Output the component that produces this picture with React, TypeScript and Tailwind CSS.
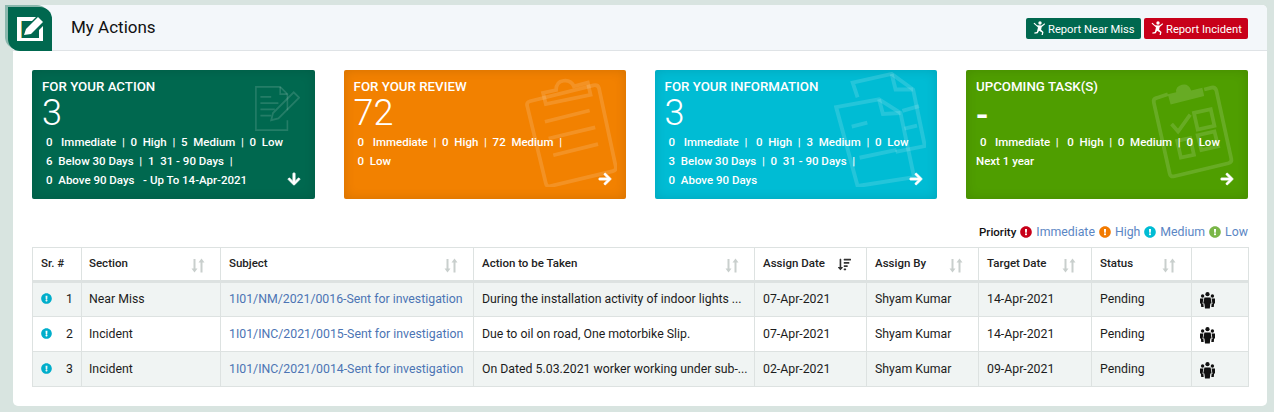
import React from "react";
import { FaArrowDown, FaArrowRight, FaExclamationCircle, FaSortAmountDown } from "react-icons/fa";

const Sort = () => (
  <svg width="14" height="15" viewBox="0 0 14 15" className="mt-[3px] text-[#c9cfcd]" fill="currentColor">
    <rect x="2.5" y="1" width="2" height="10" />
    <path d="M0.5 10.5h6L3.5 14.5z" />
    <rect x="9.5" y="4" width="2" height="10.5" />
    <path d="M7.5 4.5h6L10.5 0.5z" />
  </svg>
);

const Group = () => (
  <svg width="15" height="17" viewBox="0 0 15 17" fill="#111" className="mt-[2px]">
    <circle cx="7.5" cy="2.2" r="2.1" />
    <circle cx="2.6" cy="4" r="1.7" />
    <circle cx="12.4" cy="4" r="1.7" />
    <path d="M4.4 5.6h6.2l1 6h-1.3l-.5 5H5l-.6-5H3.2z" />
    <path d="M0 6.4h3.4l-.9 5.6h.9l.3 3H1.2l-.3-3.6H0zM15 6.4h-3.4l.9 5.6h-.9l-.3 3h2.5l.3-3.6h.9z" />
  </svg>
);

const Runner = () => (
  <svg width="12" height="14" viewBox="0 0 12 14" fill="currentColor" className="shrink-0">
    <circle cx="7" cy="2" r="1.7" />
    <path d="M0.5 2.5l1-.8 2.5 2.5 4.5.2 3-2.2.6.9-3.4 3-.6 2.6 2.4 2.3-.8 3.5-1.2-.3.6-2.6-3-1.8-1.4 2.4-3.2.6-.2-1.2 2.5-.7L5 6.4 4 5.6z" />
  </svg>
);

const HeaderIcon = () => (
  <svg width="27" height="26" viewBox="0 0 27 26">
    <path d="M0 1h19l-4 4H4v17h18v-8l4-4v15H0z" fill="#fff" />
    <path d="M4 5h1v17H4z" fill="#c9b458" />
    <path d="M7 19l2-6L21 1l5 5-12 12z" fill="#fff" />
  </svg>
);

const W = "rgba(255,255,255,0.14)";

const ActionArt = () => (
  <svg width="45" height="47" viewBox="0 0 50 50" fill="none" stroke={W} strokeWidth="1.8">
    <path d="M36 27V9L28 1H1v48h35V38" />
    <path d="M28 1v8h8" />
    <path d="M6 12h12M6 19h20M6 26h16M6 33h12" strokeWidth="2" />
    <path d="M18 38l2-8L43 7l6 6-23 23z" strokeWidth="2" />
  </svg>
);

const ReviewArt = () => (
  <svg width="92" height="110" viewBox="0 0 96 118" fill="none" stroke={W} strokeWidth="4">
    <path d="M4 26L72 9q5-1 6 3l18 84q1 4-3 5l-67 16q-4 1-5-3L1 31q-1-4 3-5z" />
    <path d="M21 29l-3-12 14-3q0-9 8-10t11 6l15-4 3 13z" />
    <path d="M20 48l48-12M24 66l50-12M29 84l48-12" />
  </svg>
);

const InfoArt = () => (
  <svg width="92" height="115" viewBox="0 0 94 118" fill="none" stroke={W} strokeWidth="4">
    <path d="M24 26L19 11 59 2l22 16 12 58-30 6" />
    <path d="M59 2l4 16 18 0" />
    <path d="M2 36l44-8 22 14 14 66-58 9z" />
    <path d="M46 28l4 15 18-1" />
    <path d="M18 56l16-4M26 88l38-8M70 40l17-5M72 58l13-3" />
  </svg>
);

const TaskArt = () => (
  <svg width="88" height="97" viewBox="0 0 90 104" fill="none" stroke={W} strokeWidth="4">
    <path d="M18 12L6 16q-4 1-3 5l17 76q1 4 5 3l58-14q4-1 3-5L70 8q-1-4-5-3l-8 2" />
    <path d="M18 12l3 11 36-9-2-9-12 3q-3-8-10-6t-6 8z" fill={W} stroke="none" />
    <path d="M22 44l7 8 13-18" />
    <path d="M46 32l18-4 4 18-18 4zM28 62l14-3 4 18-14 3zM50 56l18-4 4 16-18 4z" />
  </svg>
);

type CardProps = {
  title: string;
  value: string;
  bg: string;
  artPos: string;
  lines: string[];
  art: React.ReactNode;
  down?: boolean;
};

const Card = ({ title, value, bg, artPos, lines, art, down }: CardProps) => (
  <div className={`relative h-[129px] overflow-hidden rounded-[2px] px-[10px] pt-[8px] text-white shadow-[inset_0_0_12px_rgba(0,0,0,0.12)] ${bg}`}>
    <div className={`absolute ${artPos}`}>{art}</div>
    <div className="relative text-[13.3px] font-medium leading-[17px]">{title}</div>
    <div className={`relative h-[36px] text-[36px] leading-[36px] ${value === "-" ? "pt-[3px] font-medium" : "font-light"}`}>{value}</div>
    <div className="relative mt-[2px] whitespace-pre text-[11.5px] font-medium leading-[19px]">
      {lines.map((l) => (
        <div key={l} className={l.startsWith("Next") ? "" : "pl-[4px]"}>{l}</div>
      ))}
    </div>
    <div className="absolute bottom-[13px] right-[14px] text-[14px]">
      {down ? <FaArrowDown strokeWidth={28} /> : <FaArrowRight strokeWidth={28} />}
    </div>
  </div>
);

const Legend = ({ color, label }: { color: string; label: string }) => (
  <span className="flex items-center gap-[4px]">
    <FaExclamationCircle className={`text-[12px] ${color}`} />
    <span className="text-[#5b86c4]">{label}</span>
  </span>
);

const cols = [49, 139, 253, 281, 112, 112, 113, 100, 57];
const heads = ["Sr. #", "Section", "Subject", "Action to be Taken", "Assign Date", "Assign By", "Target Date", "Status", ""];
const rows = [
  ["1", "Near Miss", "1I01/NM/2021/0016-Sent for investigation", "During the installation activity of indoor lights ...", "07-Apr-2021", "14-Apr-2021"],
  ["2", "Incident", "1I01/INC/2021/0015-Sent for investigation", "Due to oil on road, One motorbike Slip.", "07-Apr-2021", "14-Apr-2021"],
  ["3", "Incident", "1I01/INC/2021/0014-Sent for investigation", "On Dated 5.03.2021 worker working under sub-...", "02-Apr-2021", "09-Apr-2021"],
];

const td = "h-[35px] border border-[#dde2e1] px-[8px] py-0 align-middle";

export default function App() {
  return (
    <div className="h-[412px] w-[1274px] overflow-hidden bg-[#d8e4e0] pl-[13px] pr-[7px] pt-[5px] font-['Roboto',sans-serif] text-[#1c1c1c]">
      <div className="h-[401px] rounded-[5px] bg-white">
        <div className="relative flex h-[46px] items-center justify-between rounded-t-[5px] border-b border-[#dfe3e6] bg-[#f3f7fa] pl-[58px] pr-[19px]">
          <div className="absolute left-[-5px] top-[2px] h-[44px] w-[44px] rounded-bl-[12px] rounded-tr-[12px] bg-[#00684f] pl-[9px] pt-[9px] shadow-[-3px_-2px_0_#8ab8ad]">
            <HeaderIcon />
          </div>
          <h1 className="text-[17px] font-normal leading-none text-[#111]">My Actions</h1>
          <div className="mt-[1px] flex gap-[3px] text-[11.2px] leading-[21px] text-white">
            <button className="flex h-[21px] w-[115px] items-center gap-[3px] rounded-[2px] bg-[#00684f] pl-[7px]">
              <Runner /><span className="pt-[2px]">Report Near Miss</span>
            </button>
            <button className="flex h-[21px] w-[104px] items-center gap-[3px] rounded-[2px] bg-[#c8001a] pl-[7px]">
              <Runner /><span className="pt-[2px]">Report Incident</span>
            </button>
          </div>
        </div>

        <div className="px-[19px] pt-[19px]">
          <div className="grid grid-cols-[283px_282.4px_282.8px_282px] gap-[28.6px]">
            <Card
              title="FOR YOUR ACTION" value="3" bg="bg-[#00684f]" art={<ActionArt />} artPos="right-[15px] top-[15px]" down
              lines={[
                "0   Immediate  |  0  High  |  5  Medium  |  0  Low",
                "6  Below 30 Days  |  1  31 - 90 Days  |",
                "0  Above 90 Days   - Up To 14-Apr-2021",
              ]}
            />
            <Card
              title="FOR YOUR REVIEW" value="72" bg="bg-[#f28100]" art={<ReviewArt />} artPos="right-[9px] top-[7px]"
              lines={["0   Immediate  |  0  High  |  72  Medium  |", "0  Low"]}
            />
            <Card
              title="FOR YOUR INFORMATION" value="3" bg="bg-[#00bcd4]" art={<InfoArt />} artPos="right-[11px] top-[2px]"
              lines={[
                "0   Immediate  |   0  High  |  3  Medium  |  0  Low",
                "3  Below 30 Days  |  0  31 - 90 Days  |",
                "0  Above 90 Days",
              ]}
            />
            <Card
              title="UPCOMING TASK(S)" value="-" bg="bg-[#4f9e00]" art={<TaskArt />} artPos="right-[11px] top-[13px]"
              lines={["0   Immediate  |   0  High  |  0  Medium  |  0  Low", "Next 1 year"]}
            />
          </div>

          <div className="mt-[24px] flex h-[19px] items-center justify-end gap-[4px] text-[12.3px] leading-none">
            <span className="text-[11.5px] font-medium text-[#111]">Priority</span>
            <Legend color="text-[#c8001a]" label="Immediate" />
            <Legend color="text-[#f27a00]" label="High" />
            <Legend color="text-[#00bcd4]" label="Medium" />
            <Legend color="text-[#7ab648]" label="Low" />
          </div>

          <table className="mt-[5px] w-[1216px] table-fixed border-collapse text-[12.3px]">
            <colgroup>
              {cols.map((c, i) => (
                <col key={i} style={{ width: c }} />
              ))}
            </colgroup>
            <thead>
              <tr className="border-b-[3px] border-[#dde2e1]">
                {heads.map((h, i) => (
                  <th key={i} className={`h-[34px] border border-[#dde2e1] py-0 pr-[8px] text-left align-middle text-[11.5px] font-medium text-[#222] ${i === 1 ? "pl-[7px]" : "pl-[8px]"}`}>
                    <div className="flex items-center justify-between pr-[1px]">
                      <span>{h}</span>
                      {i > 0 && i < 8 && (i === 4 ? <FaSortAmountDown className="mr-[6px] text-[13px] text-[#333]" /> : <span className="mr-[6px]"><Sort /></span>)}
                    </div>
                  </th>
                ))}
              </tr>
            </thead>
            <tbody>
              {rows.map((r, i) => (
                <tr key={r[0]} className={i % 2 === 0 ? "bg-[#f0f4f3]" : "bg-white"}>
                  <td className={td}>
                    <div className="flex items-center justify-between">
                      <FaExclamationCircle className="-mt-[2px] text-[11px] text-[#00aecb]" />
                      <span>{r[0]}</span>
                    </div>
                  </td>
                  <td className={`${td} !pl-[7px]`}>{r[1]}</td>
                  <td className={`${td} whitespace-nowrap text-[#4c74b4]`}>{r[2]}</td>
                  <td className={`${td} whitespace-nowrap`}>{r[3]}</td>
                  <td className={td}>{r[4]}</td>
                  <td className={td}>Shyam Kumar</td>
                  <td className={td}>{r[5]}</td>
                  <td className={td}>Pending</td>
                  <td className={td}><Group /></td>
                </tr>
              ))}
            </tbody>
          </table>
        </div>
      </div>
    </div>
  );
}
